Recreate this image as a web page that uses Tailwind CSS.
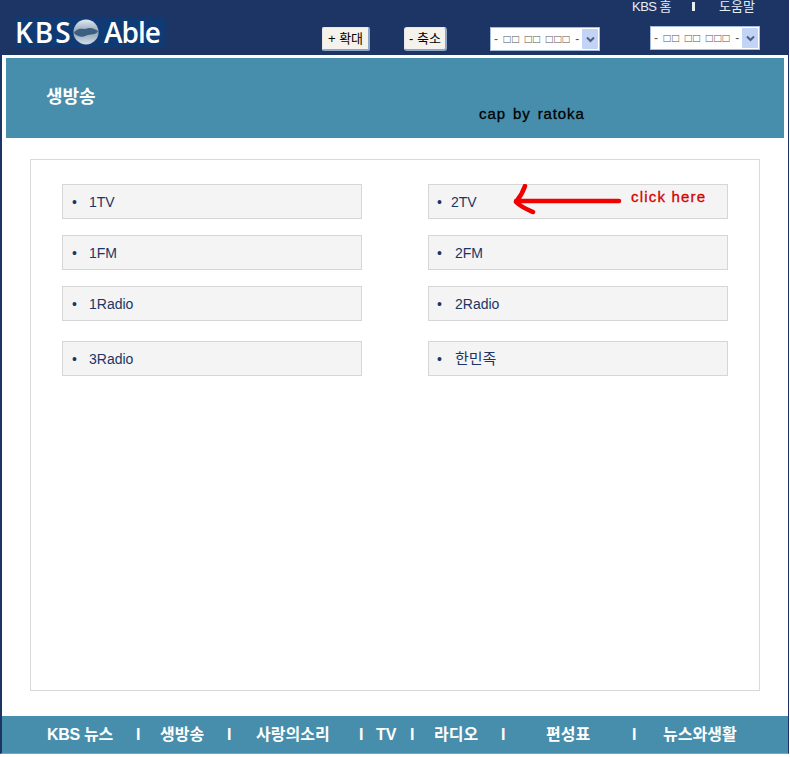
<!DOCTYPE html>
<html lang="ko">
<head>
<meta charset="utf-8">
<script src="https://cdn.jsdelivr.net/npm/@tailwindcss/browser@4"></script>
</head>
<body class="bg-white font-['Liberation_Sans','Noto_Sans_CJK_KR',sans-serif]">
<div class="w-[790px] h-[757px] bg-white flex flex-col overflow-hidden">
  <header class="h-[55px] bg-[#1c3564] relative shrink-0 w-[789px]">
    <div class="flex h-[13px] items-center text-[13px] leading-none text-[#e8edf5] pl-[632px]">
      <span class="w-[39px] whitespace-nowrap tracking-[-0.5px]">KBS 홈</span>
      <span class="ml-[21px] w-[3px] h-[9px] bg-[#e8edf5]"></span>
      <span class="ml-[24px] whitespace-nowrap">도움말</span>
    </div>
    <div class="flex items-start pt-[5px] pl-[15px]">
      <div class="w-[150px] h-[29px] bg-[#0f3a73] flex items-center pb-[2px] text-white leading-none font-['Open_Sans','Noto_Sans',sans-serif] font-semibold">
        <span class="tracking-[2px] w-[58px] text-[28px]">KBS</span>
        <svg class="shrink-0" width="26" height="26" viewBox="0 0 28 28"><defs><linearGradient id="g" x1="0" y1="0" x2="0" y2="1"><stop offset="0" stop-color="#e3e9f0"/><stop offset="0.5" stop-color="#8fa3b8"/><stop offset="1" stop-color="#d4dde8"/></linearGradient></defs><circle cx="14" cy="14" r="13.5" fill="url(#g)"/><path d="M1 15 C6 8 11 12 16 10 C20 9 24 11 27 13 C24 18 19 16 14 18 C9 20 5 19 1 15Z" fill="#3d5f80"/></svg>
        <span class="ml-[5px] text-[28px] tracking-[-1px] font-semibold">Able</span>
      </div>
      <button class="ml-[157px] mt-[9px] w-[48px] h-[24px] bg-[#f4f2ea] border border-b-2 border-r-2 border-[#e8e8e8] border-b-[#8fa6c8] border-r-[#8fa6c8] rounded-[2px] text-[13px] leading-none text-black whitespace-nowrap">+ 확대</button>
      <button class="ml-[34px] mt-[9px] w-[43px] h-[24px] bg-[#f4f2ea] border border-b-2 border-r-2 border-[#e8e8e8] border-b-[#8fa6c8] border-r-[#8fa6c8] rounded-[3px] text-[13px] leading-none text-black whitespace-nowrap">- 축소</button>
      <div class="ml-[43px] mt-[9px] w-[110px] h-[24px] bg-white border border-[#a5bcdc] flex items-center justify-between pl-[3px] pr-[1px]">
        <span class="text-[12px] leading-none text-[#555] whitespace-nowrap tracking-[1.1px]">- □□ □□ □□□ -</span>
        <span class="w-[16px] h-[20px] bg-[#c3d3f5] rounded-[1px] flex items-center justify-center">
          <svg width="9" height="7" viewBox="0 0 9 7"><path d="M1 1.5 L4.5 5 L8 1.5" fill="none" stroke="#4d6185" stroke-width="2"/></svg>
        </span>
      </div>
      <div class="ml-[50px] mt-[8px] w-[110px] h-[24px] bg-white border border-[#a5bcdc] flex items-center justify-between pl-[3px] pr-[1px]">
        <span class="text-[12px] leading-none text-[#555] whitespace-nowrap tracking-[1.1px]">- □□ □□ □□□ -</span>
        <span class="w-[16px] h-[20px] bg-[#c3d3f5] rounded-[1px] flex items-center justify-center">
          <svg width="9" height="7" viewBox="0 0 9 7"><path d="M1 1.5 L4.5 5 L8 1.5" fill="none" stroke="#4d6185" stroke-width="2"/></svg>
        </span>
      </div>
    </div>
  </header>

  <div class="w-[789px] h-[661px] shrink-0 border-l-2 border-r-1 border-[#1c3564] bg-white pl-[4px] pr-[4px] pt-[3px]">
    <div class="h-[80px] bg-[#468eac] flex items-start relative">
      <span class="ml-[40px] mt-[30px] w-[60px] text-white text-[18px] leading-[18px] font-bold whitespace-nowrap">생방송</span>
      <span class="ml-[373px] mt-[47px] text-black text-[15px] leading-[18px] tracking-[0.9px] [word-spacing:2px] whitespace-nowrap [-webkit-text-stroke:0.3px_black]">cap by ratoka</span>
    </div>
    <div class="mt-[21px] ml-[24px] w-[730px] h-[532px] border border-[#d9d9d9] pt-[24px] pl-[31px]">
      <div class="grid grid-cols-[300px_300px] gap-x-[66px]">
        <div class="h-[35px] bg-[#f4f4f4] border border-[#d6d6d6] flex items-center pl-[9px] pt-[2px] text-[14px] text-[#1c3564]"><span class="w-[17px]">•</span>1TV</div>
        <div class="h-[35px] bg-[#f4f4f4] border border-[#d6d6d6] flex items-center pl-[8px] pt-[2px] text-[14px] text-[#1c3564] relative">
          <span class="w-[14px]">•</span>2TV
          <svg class="absolute left-[84px] top-[-1px]" width="110" height="32" viewBox="0 0 110 32"><path d="M106 17 L3 17 M12 2 C10 8 7 13 3 18 C8 23 13 25 20 28" fill="none" stroke="#f00000" stroke-width="4.5" stroke-linecap="round" stroke-linejoin="round"/></svg>
          <span class="absolute left-[202px] top-[3px] text-[15px] leading-[18px] text-[#d40000] font-normal tracking-[1.2px] whitespace-nowrap [-webkit-text-stroke:0.3px_#d40000]">click here</span>
        </div>
        <div class="mt-[16px] h-[35px] bg-[#f4f4f4] border border-[#d6d6d6] flex items-center pl-[9px] pt-[2px] text-[14px] text-[#1c3564]"><span class="w-[17px]">•</span>1FM</div>
        <div class="mt-[16px] h-[35px] bg-[#f4f4f4] border border-[#d6d6d6] flex items-center pl-[8px] pt-[2px] text-[14px] text-[#1c3564]"><span class="w-[18px]">•</span>2FM</div>
        <div class="mt-[16px] h-[35px] bg-[#f4f4f4] border border-[#d6d6d6] flex items-center pl-[9px] pt-[2px] text-[14px] text-[#1c3564]"><span class="w-[17px]">•</span>1Radio</div>
        <div class="mt-[16px] h-[35px] bg-[#f4f4f4] border border-[#d6d6d6] flex items-center pl-[8px] pt-[2px] text-[14px] text-[#1c3564]"><span class="w-[18px]">•</span>2Radio</div>
        <div class="mt-[20px] h-[35px] bg-[#f4f4f4] border border-[#d6d6d6] flex items-center pl-[9px] pt-[2px] text-[14px] text-[#1c3564]"><span class="w-[17px]">•</span>3Radio</div>
        <div class="mt-[20px] h-[35px] bg-[#f4f4f4] border border-[#d6d6d6] flex items-center pl-[8px] pt-[2px] text-[15px] text-[#1c3564]"><span class="w-[18px] text-[14px]">•</span>한민족</div>
      </div>
    </div>
  </div>

  <footer class="w-[789px] h-[38px] bg-[#468eac] border-l-2 border-r-1 border-[#1c3564] border-b border-b-[#9a9a9a] shrink-0 flex items-center text-white text-[16px] font-bold leading-none whitespace-nowrap">
    <span class="ml-[45px] w-[65px] tracking-[-0.3px]">KBS 뉴스</span>
    <span class="ml-[24px] w-[3px]">I</span>
    <span class="ml-[21px] w-[45px]">생방송</span>
    <span class="ml-[22px] w-[3px]">I</span>
    <span class="ml-[26px] w-[75px]">사랑의소리</span>
    <span class="ml-[28px] w-[3px]">I</span>
    <span class="ml-[14px] w-[21px]">TV</span>
    <span class="ml-[13px] w-[3px]">I</span>
    <span class="ml-[21px] w-[45px]">라디오</span>
    <span class="ml-[22px] w-[3px]">I</span>
    <span class="ml-[42px] w-[45px]">편성표</span>
    <span class="ml-[41px] w-[3px]">I</span>
    <span class="ml-[28px] w-[75px]">뉴스와생활</span>
  </footer>
</div>
</body>
</html>
